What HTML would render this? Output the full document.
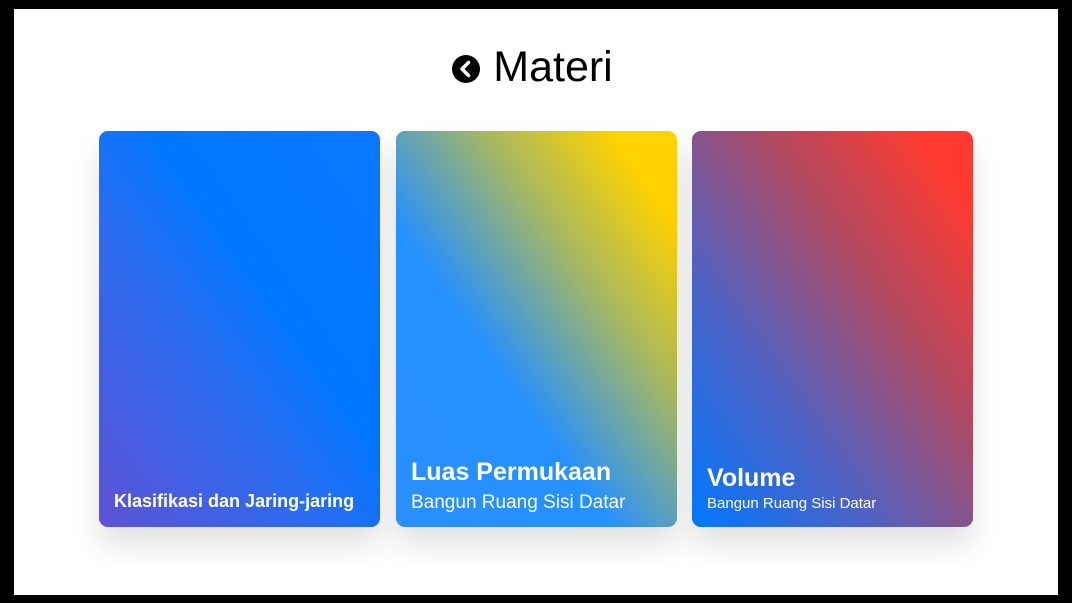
<!DOCTYPE html>
<html><head><meta charset="utf-8"><style>
html,body{margin:0;padding:0;}
body{width:1072px;height:603px;background:#000;position:relative;overflow:hidden;font-family:"Liberation Sans",sans-serif;}
.page{position:absolute;left:14px;top:9px;width:1044px;height:586px;background:#fff;}
.title{position:absolute;left:-4px;top:42px;width:1072px;text-align:center;font-size:43px;color:#000;line-height:50px;}
.title svg{vertical-align:-3px;margin-right:12px;}
.card{position:absolute;top:131px;width:281px;height:396px;border-radius:9px;box-shadow:0 18px 30px rgba(0,0,0,0.12);color:#fff;}
.c1{left:99px;background:linear-gradient(to top right,#5e52d4 0%,#2a6cf0 40%,#0077ff 60%,#0a78ff 100%);}
.c2{left:396px;background:linear-gradient(to top right,#2a8fff 0%,#2590ff 38%,#a8b860 66%,#ffd200 88%);}
.c3{left:692px;background:linear-gradient(to top right,#0077ff 0%,#4e62c4 32%,#b3485f 64%,#ff3b30 90%);}
.t{position:absolute;left:15px;font-weight:bold;}
.s{position:absolute;left:15px;}
</style></head><body>
<div class="page"></div>
<div class="title"><svg width="30" height="30" viewBox="0 0 30 30"><circle cx="15" cy="15" r="14" fill="#000"/><path d="M17.5 8.5 L11 15 L17.5 21.5" stroke="#fff" stroke-width="3.5" fill="none" stroke-linecap="round" stroke-linejoin="round"/></svg>Materi</div>
<div class="card c1"><div class="t" style="top:360px;font-size:18px;">Klasifikasi dan Jaring-jaring</div></div>
<div class="card c2"><div class="t" style="top:327px;font-size:25px;">Luas Permukaan</div><div class="s" style="top:361px;font-size:19px;">Bangun Ruang Sisi Datar</div></div>
<div class="card c3"><div class="t" style="top:333px;font-size:25px;">Volume</div><div class="s" style="top:364px;font-size:15px;">Bangun Ruang Sisi Datar</div></div>
</body></html>
